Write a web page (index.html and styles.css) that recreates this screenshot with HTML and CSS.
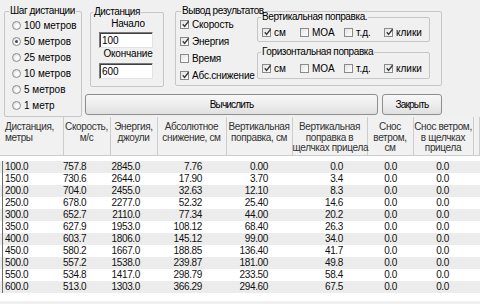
FILE: index.html
```html
<!DOCTYPE html>
<html>
<head>
<meta charset="utf-8">
<link rel="stylesheet" href="styles.css">
</head>
<body>
<div class="app">
  <div class="top">
    <fieldset class="grp g-step">
      <legend>Шаг дистанции</legend>
      <div class="radios">
        <label class="opt"><span class="radio"></span>100 метров</label>
        <label class="opt"><span class="radio on"></span>50 метров</label>
        <label class="opt"><span class="radio"></span>25 метров</label>
        <label class="opt"><span class="radio"></span>10 метров</label>
        <label class="opt"><span class="radio"></span>5 метров</label>
        <label class="opt"><span class="radio"></span>1 метр</label>
      </div>
    </fieldset>
    <div class="right">
      <div class="row1">
        <fieldset class="grp g-dist">
          <legend>Дистанция</legend>
          <div class="cap">Начало</div>
          <input class="inp" type="text" value="100">
          <div class="cap">Окончание</div>
          <input class="inp inp2" type="text" value="600">
        </fieldset>
        <fieldset class="grp g-out">
          <legend>Вывод результатов</legend>
          <div class="out-body">
            <div class="checks">
              <label class="opt ch"><span class="cb on"><svg viewBox="0 0 9 9"><path d="M1.8 4.2 L3.6 6.4 L7.6 1.2"/></svg></span>Скорость</label>
              <label class="opt ch"><span class="cb on"><svg viewBox="0 0 9 9"><path d="M1.8 4.2 L3.6 6.4 L7.6 1.2"/></svg></span>Энергия</label>
              <label class="opt ch"><span class="cb"></span>Время</label>
              <label class="opt ch"><span class="cb on"><svg viewBox="0 0 9 9"><path d="M1.8 4.2 L3.6 6.4 L7.6 1.2"/></svg></span>Абс.снижение</label>
            </div>
            <div class="subs">
              <fieldset class="grp sub sub-v">
                <legend>Вертикальная поправка.</legend>
                <div class="hrow">
                  <label class="opt"><span class="cb on"><svg viewBox="0 0 9 9"><path d="M1.8 4.2 L3.6 6.4 L7.6 1.2"/></svg></span>см</label>
                  <label class="opt"><span class="cb"></span>MOA</label>
                  <label class="opt"><span class="cb"></span>т.д.</label>
                  <label class="opt"><span class="cb on"><svg viewBox="0 0 9 9"><path d="M1.8 4.2 L3.6 6.4 L7.6 1.2"/></svg></span>клики</label>
                </div>
              </fieldset>
              <fieldset class="grp sub sub-h">
                <legend>Горизонтальная поправка</legend>
                <div class="hrow">
                  <label class="opt"><span class="cb on"><svg viewBox="0 0 9 9"><path d="M1.8 4.2 L3.6 6.4 L7.6 1.2"/></svg></span>см</label>
                  <label class="opt"><span class="cb"></span>MOA</label>
                  <label class="opt"><span class="cb"></span>т.д.</label>
                  <label class="opt"><span class="cb on"><svg viewBox="0 0 9 9"><path d="M1.8 4.2 L3.6 6.4 L7.6 1.2"/></svg></span>клики</label>
                </div>
              </fieldset>
            </div>
          </div>
        </fieldset>
      </div>
      <div class="btns">
        <button class="btn calc">Вычислить</button>
        <button class="btn close">Закрыть</button>
      </div>
    </div>
  </div>
  <div class="list">
    <table class="tbl">
      <colgroup>
        <col class="c1"><col class="c2"><col class="c3"><col class="c4"><col class="c5"><col class="c6"><col class="c7"><col class="c8"><col>
      </colgroup>
      <thead>
        <tr>
          <th class="lft">Дистанция,<br>метры</th>
          <th>Скорость,<br>м/с</th>
          <th>Энергия,<br>джоули</th>
          <th>Абсолютное<br>снижение, см</th>
          <th>Вертикальная<br>поправка, см</th>
          <th>Вертикальная<br>поправка в<br>щелчках прицела</th>
          <th>Снос<br>ветром,<br>см</th>
          <th>Снос ветром,<br>в щелчках<br>прицела</th>
          <th></th>
        </tr>
      </thead>
      <tbody>
        <tr class="sp"><td colspan="9"></td></tr>
        <tr class="alt"><td>100.0</td><td>757.8</td><td>2845.0</td><td>7.76</td><td>0.00</td><td>0.0</td><td>0.0</td><td>0.0</td><td></td></tr>
        <tr><td>150.0</td><td>730.6</td><td>2644.0</td><td>17.90</td><td>3.70</td><td>3.4</td><td>0.0</td><td>0.0</td><td></td></tr>
        <tr class="alt"><td>200.0</td><td>704.0</td><td>2455.0</td><td>32.63</td><td>12.10</td><td>8.3</td><td>0.0</td><td>0.0</td><td></td></tr>
        <tr><td>250.0</td><td>678.0</td><td>2277.0</td><td>52.32</td><td>25.40</td><td>14.6</td><td>0.0</td><td>0.0</td><td></td></tr>
        <tr class="alt"><td>300.0</td><td>652.7</td><td>2110.0</td><td>77.34</td><td>44.00</td><td>20.2</td><td>0.0</td><td>0.0</td><td></td></tr>
        <tr><td>350.0</td><td>627.9</td><td>1953.0</td><td>108.12</td><td>68.40</td><td>26.3</td><td>0.0</td><td>0.0</td><td></td></tr>
        <tr class="alt"><td>400.0</td><td>603.7</td><td>1806.0</td><td>145.12</td><td>99.00</td><td>34.0</td><td>0.0</td><td>0.0</td><td></td></tr>
        <tr><td>450.0</td><td>580.2</td><td>1667.0</td><td>188.85</td><td>136.40</td><td>41.7</td><td>0.0</td><td>0.0</td><td></td></tr>
        <tr class="alt"><td>500.0</td><td>557.2</td><td>1538.0</td><td>239.87</td><td>181.00</td><td>49.8</td><td>0.0</td><td>0.0</td><td></td></tr>
        <tr><td>550.0</td><td>534.8</td><td>1417.0</td><td>298.79</td><td>233.50</td><td>58.4</td><td>0.0</td><td>0.0</td><td></td></tr>
        <tr class="alt"><td>600.0</td><td>513.0</td><td>1303.0</td><td>366.29</td><td>294.60</td><td>67.5</td><td>0.0</td><td>0.0</td><td></td></tr>
      </tbody>
    </table>
  </div>
</div>
</body>
</html>
```

FILE: styles.css
```css
* { box-sizing: border-box; }

body {
  margin: 0;
  background: #f0f0f0;
  color: #000;
  font-family: "Liberation Sans", Arial, sans-serif;
  font-size: 10px;
}

.app {
  width: 480px;
  height: 304px;
  overflow: hidden;
}

.top {
  display: flex;
  align-items: flex-start;
  padding: 5px 0 0 4px;
}

fieldset.grp {
  margin: 0;
  padding: 0;
  min-width: 0;
  border: 1px solid #c6c6c6;
  border-radius: 2px;
}

fieldset.grp > legend {
  padding: 0 1px;
  height: 12px;
  line-height: 12px;
  white-space: nowrap;
  letter-spacing: -0.4px;
}

.g-step { width: 78px; height: 112px; }
.g-step > legend { margin-left: 4px; letter-spacing: -1.1px; }

.radios { padding-left: 7px; }

.opt {
  display: flex;
  align-items: center;
  height: 16px;
  gap: 3px;
  white-space: nowrap;
}

.radio {
  flex: none;
  width: 9px;
  height: 9px;
  border-radius: 50%;
  border: 1px solid #8c8c8c;
  background: radial-gradient(circle at 65% 65%, #ffffff 0, #f4f4f4 40%, #cfcfcf 100%);
  position: relative;
}
.radio.on::after {
  content: "";
  position: absolute;
  left: 2px; top: 2px;
  width: 3px; height: 3px;
  border-radius: 50%;
  background: #4a4a4a;
}

.right {
  margin-left: 3px;
  display: flex;
  flex-direction: column;
}

.row1 { display: flex; align-items: flex-start; }

.g-dist {
  margin-left: 5px !important;
  margin-top: 1px !important;
  width: 74px;
  height: 81px;
}
.g-dist > legend { margin-left: 2px; letter-spacing: -0.6px; }

.cap {
  height: 12px;
  line-height: 12px;
  text-align: center;
  letter-spacing: -0.2px;
  padding-left: 2px;
}

.inp {
  display: block;
  margin: 2px 0 0 8px;
  width: 54px;
  height: 16px;
  padding: 0 2px;
  font: inherit;
  color: #000;
  background: #fff;
  border: 1px solid;
  border-color: #7a7a7a #e3e3e3 #e3e3e3 #7a7a7a;
  box-shadow: inset 1px 1px 0 #404040;
  outline: none;
}
.inp2 { margin-top: 3px; }

.g-out {
  margin-left: 11px !important;
  width: 267px;
  height: 81px;
}
.g-out > legend { margin-left: 5px; }

.out-body {
  display: grid;
  grid-template-columns: 77px 173px;
  padding-left: 4px;
}

.checks { margin-top: -1px; letter-spacing: -0.2px; }
.checks .opt { height: 17px; }

.cb {
  flex: none;
  width: 9px;
  height: 9px;
  border: 1px solid #8a8a8a;
  background: linear-gradient(135deg, #e4e4e4, #ffffff);
  position: relative;
}
.cb svg {
  position: absolute;
  left: 0; top: -1px;
  width: 9px; height: 9px;
  overflow: visible;
}
.cb svg path {
  fill: none;
  stroke: #3c3c3c;
  stroke-width: 1.4;
}

.subs { margin-top: -6px; }

.sub { width: 173px; }
.sub > legend { margin-left: 3px; }
.sub-v { height: 31px; }
.sub-h { height: 33px; margin-top: 4px !important; }

.hrow {
  display: grid;
  grid-template-columns: 38px 44px 40px auto;
  padding-left: 4px;
  margin-top: 3px;
}
.sub-h .hrow { margin-top: 4px; }
.hrow .opt { height: 12px; }

.btns {
  display: flex;
  gap: 4px;
  margin-top: 7px;
}

.btn {
  height: 21px;
  padding: 0;
  font: inherit;
  letter-spacing: -0.8px;
  color: #000;
  border: 1px solid #8e8e8e;
  border-radius: 3px;
  background: linear-gradient(#f8f8f8, #ededed 50%, #e0e0e0);
}
.calc { width: 293px; }
.close { width: 60px; }

.list {
  height: 184px;
  background: #fff;
}

.tbl {
  width: 480px;
  table-layout: fixed;
  border-collapse: collapse;
  font-size: 10px;
  letter-spacing: -0.35px;
}
.c1 { width: 63px; }
.c2 { width: 47px; }
.c3 { width: 47px; }
.c4 { width: 69px; }
.c5 { width: 66px; }
.c6 { width: 75px; }
.c7 { width: 46px; }
.c8 { width: 60px; }

.tbl th {
  height: 38px;
  padding: 5px 0 0;
  vertical-align: top;
  font-weight: normal;
  line-height: 10.5px;
  text-align: center;
  white-space: nowrap;
  color: #333;
  background: #f1f1f1;
  border-right: 1px solid #cdcdcd;
  border-bottom: 1px solid #cdcdcd;
}
.tbl th.lft { text-align: left; padding-left: 5px; }

.tbl tr.sp td { height: 6px; padding: 0; }

.tbl td {
  height: 12px;
  padding: 0 24px 0 0;
  line-height: 12px;
  text-align: right;
  white-space: nowrap;
  color: #111;
}
.tbl td:first-child {
  text-align: left;
  padding-left: 5px;
}
.tbl tr:not(.sp) td:first-child {
  background: linear-gradient(#6e6e6e, #6e6e6e) 2px 0 / 1px 100% no-repeat, #fff;
}
.tbl tr.alt td { background: #ececec; }
.tbl tr.alt td:first-child {
  background: linear-gradient(#6e6e6e, #6e6e6e) 2px 0 / 1px 100% no-repeat, #ececec;
}
.tbl td:nth-child(3) { padding-right: 17px; }
.tbl td:nth-child(7) { padding-right: 16px; }
```
